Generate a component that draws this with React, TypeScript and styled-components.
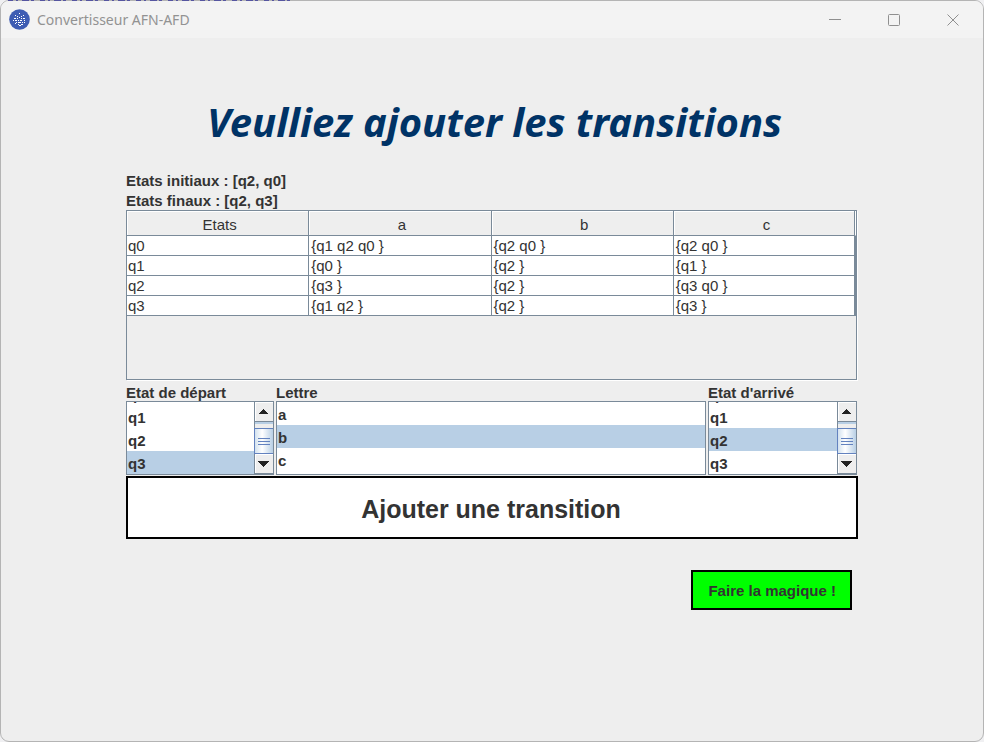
import React, { useLayoutEffect, useRef } from 'react';
import styled, { createGlobalStyle } from 'styled-components';

const LINE = '#7a8a99';
const SELECTED = '#b8cfe5';
const TEXT = '#333333';

const GlobalStyle = createGlobalStyle`
  * { box-sizing: border-box; }
  html, body, #root { height: 100%; }
  body {
    margin: 0;
    background: #f0f0f2;
    color: ${TEXT};
    font: 15px/20px "Liberation Sans", Arial, sans-serif;
    overflow: hidden;
  }
`;

const Backdrop = styled.svg`
  position: absolute;
  top: 0;
  left: 0;
`;

const Window = styled.div`
  position: relative;
  display: flex;
  flex-direction: column;
  min-height: 100vh;
  background: #eeeeee;
  border: 1px solid #b4b4b4;
  border-radius: 9px;
  overflow: hidden;
`;

const TitleBar = styled.header`
  display: flex;
  align-items: center;
  height: 37px;
  padding: 0 1px 0 8px;
  background: #f3f3f3;
  color: #929292;
`;

const WindowTitle = styled.span`
  flex: 1;
  margin-left: 7px;
  font: 14px/20px "Noto Sans", "Open Sans", sans-serif;
`;

const CaptionButton = styled.button`
  display: flex;
  align-items: center;
  justify-content: center;
  width: 59px;
  height: 37px;
  padding: 0;
  border: 0;
  background: none;
  color: #8f8f8f;
`;

const Content = styled.main`
  display: flex;
  flex-direction: column;
  padding: 60px 126px 0 125px;
`;

const Heading = styled.h1`
  margin: 0 0 24px;
  padding-left: 6px;
  color: #003366;
  font: italic 700 40px/48px "Noto Sans", "Open Sans", sans-serif;
  text-align: center;
  white-space: nowrap;
`;

const Caption = styled.p`
  height: 20px;
  margin: 0;
  font-weight: 700;
  line-height: 22px;
`;

const TablePane = styled.div`
  height: 170px;
  border: 1px solid ${LINE};
  box-shadow: 1px 1px 0 #ffffff;
`;

const Table = styled.table`
  width: 100%;
  table-layout: fixed;
  border-collapse: separate;
  border-spacing: 0;
`;

const HeaderCell = styled.th`
  height: 25px;
  padding: 4px 0 0 4px;
  border-right: 1px solid ${LINE};
  border-bottom: 1px solid ${LINE};
  box-shadow: inset 1px 1px 0 #ffffff;
  font-weight: 400;
  line-height: 20px;
  &:last-child {
    border-right-color: #ffffff;
    box-shadow: inset -1px 0 0 ${LINE}, inset 1px 1px 0 #ffffff;
  }
`;

const Cell = styled.td`
  height: 20px;
  padding: 0 2px;
  background: #ffffff;
  border-right: 1px solid ${LINE};
  border-bottom: 1px solid ${LINE};
  line-height: 19px;
  &:first-child { padding-left: 1px; }
  &:last-child { border-right-width: 2px; }
`;

const Pickers = styled.div`
  display: grid;
  grid-template-columns: 148px 1fr 149px;
  column-gap: 2px;
  margin-top: 3px;
`;

const Picker = styled.div`
  display: flex;
  flex-direction: column;
  min-width: 0;
`;

const PickerLabel = styled.label`
  height: 18px;
  font-weight: 700;
`;

const ListFrame = styled.div`
  display: flex;
  height: 74px;
  background: #ffffff;
  border: 1px solid ${LINE};
`;

const ListBox = styled.select`
  flex: 1;
  min-width: 0;
  height: 72px;
  padding: 0;
  border: 0;
  outline: 0;
  border-radius: 0;
  background: #ffffff;
  color: ${TEXT};
  font: 700 15px/23px "Liberation Sans", Arial, sans-serif;
  scrollbar-width: none;
  &::-webkit-scrollbar { display: none; }
`;

const Item = styled.option<{ $on: boolean }>`
  height: 23px;
  min-height: 23px;
  padding: 4px 1px 0;
  font-weight: 700;
  color: ${TEXT};
  background: ${(p) => (p.$on ? SELECTED : '#ffffff')};
  &:checked {
    color: ${TEXT};
    background: ${SELECTED} linear-gradient(${SELECTED}, ${SELECTED});
  }
`;

const ScrollBar = styled.div`
  display: flex;
  flex-direction: column;
  width: 19px;
  border-left: 1px solid ${LINE};
  background: #eeeeee;
`;

const ArrowButton = styled.button`
  display: flex;
  align-items: center;
  justify-content: center;
  height: 20px;
  padding: 0 2px 0 0;
  border: 0;
  border-bottom: 1px solid ${LINE};
  background: #eeeeee;
  box-shadow: inset 1px 1px 0 #ffffff;
`;

const Track = styled.div`
  display: flex;
  flex: 1;
  flex-direction: column;
  justify-content: flex-end;
  border-top: 2px solid ${SELECTED};
`;

const Thumb = styled.div`
  display: flex;
  flex-direction: column;
  align-items: center;
  justify-content: center;
  gap: 2px;
  height: 26px;
  margin-left: -1px;
  border: 1px solid #6382bf;
  border-right: 0;
  background: linear-gradient(90deg, #d3e2ef, #ffffff 40%, #b8cfe5);
`;

const Grip = styled.span`
  width: 12px;
  height: 1px;
  background: #6382bf;
`;

const AddButton = styled.button`
  height: 63px;
  margin: 1px -1px 0 0;
  padding: 3px 2px 0 0;
  background: #ffffff;
  border: 2px solid #000000;
  color: ${TEXT};
  font: 700 25px/30px "Liberation Sans", Arial, sans-serif;
`;

const MagicButton = styled.button`
  align-self: flex-end;
  height: 40px;
  margin: 31px 5px 0 0;
  padding: 2px 14px 0 15px;
  background: #00ff00;
  border: 2px solid #000000;
  color: ${TEXT};
  font: 700 15px/20px "Liberation Sans", Arial, sans-serif;
`;

const columns = ['Etats', 'a', 'b', 'c'];
const rows = [
  ['q0', '{q1 q2 q0 }', '{q2 q0 }', '{q2 q0 }'],
  ['q1', '{q0 }', '{q2 }', '{q1 }'],
  ['q2', '{q3 }', '{q2 }', '{q3 q0 }'],
  ['q3', '{q1 q2 }', '{q2 }', '{q3 }'],
];
const states = rows.map((r) => r[0]);

interface ListProps {
  id: string;
  label: string;
  items: string[];
  initial: string;
  scrollable?: boolean;
}

function List({ id, label, items, initial, scrollable }: ListProps) {
  const ref = useRef<HTMLSelectElement>(null);
  const [value, setValue] = React.useState(initial);

  useLayoutEffect(() => {
    if (ref.current) ref.current.scrollTop = scrollable ? ref.current.scrollHeight : 0;
  }, [scrollable]);

  const scroll = (dy: number) => ref.current?.scrollBy(0, dy);

  return (
    <Picker>
      <PickerLabel htmlFor={id}>{label}</PickerLabel>
      <ListFrame>
        <ListBox id={id} ref={ref} size={3} value={value} onChange={(e) => setValue(e.target.value)}>
          {items.map((item) => (
            <Item key={item} value={item} $on={item === value}>{item}</Item>
          ))}
        </ListBox>
        {scrollable && (
          <ScrollBar>
            <ArrowButton type="button" aria-label="Monter" onClick={() => scroll(-23)}>
              <svg width="10" height="5" shapeRendering="crispEdges"><path d="M0 5 5 0l5 5z" fill="#222" /></svg>
            </ArrowButton>
            <Track>
              <Thumb><Grip /><Grip /><Grip /></Thumb>
            </Track>
            <ArrowButton type="button" aria-label="Descendre" onClick={() => scroll(23)}>
              <svg width="12" height="6" shapeRendering="crispEdges"><path d="M0 0h12L6 6z" fill="#222" /></svg>
            </ArrowButton>
          </ScrollBar>
        )}
      </ListFrame>
    </Picker>
  );
}

function AppIcon() {
  return (
    <svg width="21" height="21" viewBox="0 0 21 21" aria-hidden="true">
      <circle cx="10.5" cy="10.5" r="10.3" fill="#3f5db3" />
      <path
        d="M10 4.500h1M6 6.500h1M8 7.500h1M12 7.500h1M14 6.500h1M5 9.500h2M8 9.500h1M10 8.500h1M12 9.500h1M14 9.500h2M4 11.500h1M6 11.500h2M9 11.500h1M11 11.500h2M15 11.500h1M7 13.500h1M9 13.500h3M13 13.500h1M9 15.500h1M12 15.500h2M6 14.500h1M10 16.500h2M15 13.500h1"
        stroke="#fff"
      />
    </svg>
  );
}

export default function App() {
  return (
    <>
      <GlobalStyle />
      <Window>
        <TitleBar>
          <AppIcon />
          <WindowTitle>Convertisseur AFN-AFD</WindowTitle>
          <CaptionButton type="button" aria-label="Réduire">
            <svg width="12" height="12"><path d="M0 5.500h12" stroke="currentColor" /></svg>
          </CaptionButton>
          <CaptionButton type="button" aria-label="Agrandir">
            <svg width="12" height="12"><rect x=".5" y=".5" width="11" height="11" rx="1" fill="none" stroke="currentColor" /></svg>
          </CaptionButton>
          <CaptionButton type="button" aria-label="Fermer">
            <svg width="12" height="12"><path d="M.5.5l11 11M11.500.5l-11 11" stroke="currentColor" /></svg>
          </CaptionButton>
        </TitleBar>
        <Content>
          <Heading>Veulliez ajouter les transitions</Heading>
          <Caption>Etats initiaux : [q2, q0]</Caption>
          <Caption>Etats finaux : [q2, q3]</Caption>
          <TablePane>
            <Table>
              <thead>
                <tr>{columns.map((c) => <HeaderCell key={c} scope="col">{c}</HeaderCell>)}</tr>
              </thead>
              <tbody>
                {rows.map((r) => (
                  <tr key={r[0]}>{r.map((c, i) => <Cell key={i}>{c}</Cell>)}</tr>
                ))}
              </tbody>
            </Table>
          </TablePane>
          <Pickers>
            <List id="depart" label="Etat de départ" items={states} initial="q3" scrollable />
            <List id="lettre" label="Lettre" items={['a', 'b', 'c']} initial="b" />
            <List id="arrive" label="Etat d'arrivé" items={states} initial="q2" scrollable />
          </Pickers>
          <AddButton type="button">Ajouter une transition</AddButton>
          <MagicButton type="button">Faire la magique !</MagicButton>
        </Content>
      </Window>
      <Backdrop width="300" height="2" aria-hidden="true">
        <path d="M8 .5h284" stroke="#5555a0" strokeDasharray="5 3 2 4 7 2 3 6" />
      </Backdrop>
    </>
  );
}
